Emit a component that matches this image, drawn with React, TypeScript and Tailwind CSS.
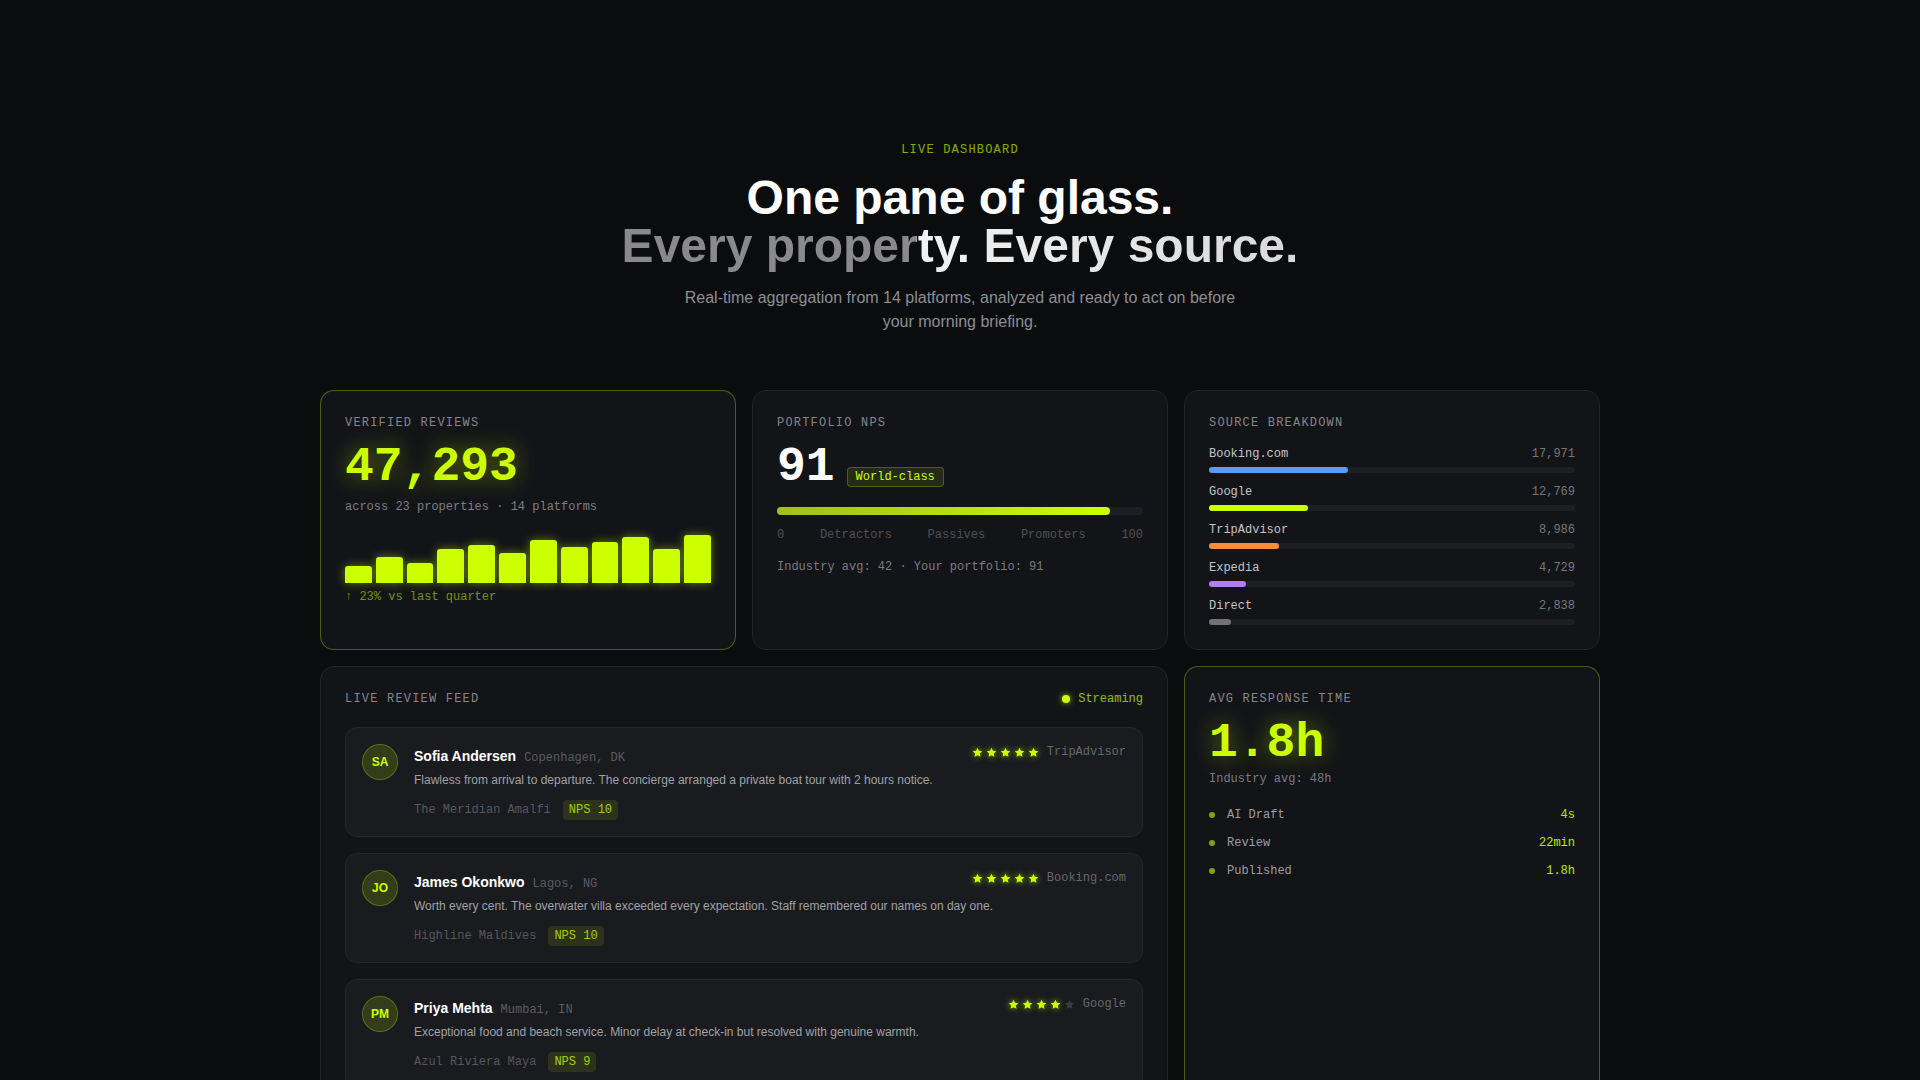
import React from "react";

const MONO = "[font-family:'Liberation_Mono',monospace]";

function Label({ children }: { children: React.ReactNode }) {
  return (
    <div className={`${MONO} text-xs leading-4 tracking-widest uppercase text-[#85868b]`}>{children}</div>
  );
}

const bars = [35, 55, 42, 70, 80, 62, 90, 75, 85, 95, 70, 100];

const sources = [
  { name: "Booking.com", v: "17,971", pct: 38, color: "bg-[#5b9df6]" },
  { name: "Google", v: "12,769", pct: 27, color: "bg-[#ccff00]" },
  { name: "TripAdvisor", v: "8,986", pct: 19, color: "bg-[#f98d3a]" },
  { name: "Expedia", v: "4,729", pct: 10, color: "bg-[#b67df3]" },
  { name: "Direct", v: "2,838", pct: 6, color: "bg-[#727378]" },
];

const reviews = [
  {
    initials: "SA",
    name: "Sofia Andersen",
    loc: "Copenhagen, DK",
    stars: 5,
    platform: "TripAdvisor",
    text: "Flawless from arrival to departure. The concierge arranged a private boat tour with 2 hours notice.",
    place: "The Meridian Amalfi",
    nps: "NPS 10",
  },
  {
    initials: "JO",
    name: "James Okonkwo",
    loc: "Lagos, NG",
    stars: 5,
    platform: "Booking.com",
    text: "Worth every cent. The overwater villa exceeded every expectation. Staff remembered our names on day one.",
    place: "Highline Maldives",
    nps: "NPS 10",
  },
  {
    initials: "PM",
    name: "Priya Mehta",
    loc: "Mumbai, IN",
    stars: 4,
    platform: "Google",
    text: "Exceptional food and beach service. Minor delay at check-in but resolved with genuine warmth.",
    place: "Azul Riviera Maya",
    nps: "NPS 9",
  },
];

function Star({ on }: { on: boolean }) {
  return (
    <svg
      width="11"
      height="11"
      viewBox="0 0 24 24"
      className={on ? "[filter:drop-shadow(0_0_3px_rgba(204,255,0,0.7))]" : ""}
    >
      <polygon
        points="12,1.5 15.1,8.3 22.5,9.1 17,14.1 18.5,21.5 12,17.8 5.5,21.5 7,14.1 1.5,9.1 8.9,8.3"
        fill={on ? "#ccff00" : "#3b3c41"}
      />
    </svg>
  );
}

const rows = [
  { k: "AI Draft", v: "4s" },
  { k: "Review", v: "22min" },
  { k: "Published", v: "1.8h" },
];

export default function App() {
  return (
    <div className="min-h-screen bg-[#0b0c0e] [font-family:'Liberation_Sans',Arial,sans-serif] text-white pb-24">
      <div className="pt-[142px] flex flex-col items-center text-center">
        <div className={`${MONO} text-xs leading-4 tracking-widest text-[#ccff00]/65`}>LIVE DASHBOARD</div>
        <h1 className="mt-4 text-5xl font-bold leading-none">
          <span className="block text-white">One pane of glass.</span>
          <span className="inline-block pb-1 -mb-1 bg-[linear-gradient(90deg,#8a8a8c_0%,#8a8a8c_43.5%,#f2f2f2_43.7%,#e6e6e6_70%,#d9d9db_100%)] bg-clip-text text-transparent">
            Every property. Every source.
          </span>
        </h1>
        <p className="mt-4 max-w-xl text-base leading-6 text-[#8e8e93]">
          Real-time aggregation from 14 platforms, analyzed and ready to act on before your morning briefing.
        </p>
      </div>

      <div className="mx-auto mt-14 w-[1280px] grid grid-cols-3 gap-4">
        {/* Verified reviews */}
        <div className="rounded-[14px] border border-[#ccff00]/30 bg-[#131418] p-6">
          <Label>Verified Reviews</Label>
          <div
            className={`${MONO} mt-3 text-5xl leading-none font-bold text-[#ccff00] [text-shadow:0_0_22px_rgba(204,255,0,0.45)]`}
          >
            47,293
          </div>
          <div className={`${MONO} mt-2 text-xs leading-4 text-[#7d7e83]`}>across 23 properties · 14 platforms</div>
          <div className="mt-5 flex h-12 items-end gap-1">
            {bars.map((h, i) => (
              <div
                key={i}
                className="flex-1 rounded-t-[3px] bg-[#ccff00] shadow-[0_0_10px_rgba(204,255,0,0.45)]"
                style={{ height: `${h}%` }}
              />
            ))}
          </div>
          <div className={`${MONO} mt-1.5 text-xs leading-4 text-[#ccff00]/55`}>↑ 23% vs last quarter</div>
        </div>

        {/* Portfolio NPS */}
        <div className="rounded-[14px] border border-[#232429] bg-[#131418] p-6">
          <Label>Portfolio NPS</Label>
          <div className="mt-3 flex items-baseline gap-3">
            <span className={`${MONO} text-5xl leading-none font-bold text-white`}>91</span>
            <span
              className={`${MONO} rounded border border-[#ccff00]/25 bg-[#ccff00]/10 px-2 py-px text-xs leading-4 text-[#ccff00]`}
            >
              World-class
            </span>
          </div>
          <div className="mt-4 h-2 w-full rounded-full bg-[#1e1f24]">
            <div className="h-2 w-[91%] rounded-full bg-[linear-gradient(90deg,#a3bd1c,#ccff00)]" />
          </div>
          <div className={`${MONO} mt-3 flex justify-between text-xs leading-4 text-[#4f5055]`}>
            <span>0</span>
            <span>Detractors</span>
            <span>Passives</span>
            <span>Promoters</span>
            <span>100</span>
          </div>
          <div className={`${MONO} mt-4 text-xs leading-4 text-[#7a7b80]`}>Industry avg: 42 · Your portfolio: 91</div>
        </div>

        {/* Source breakdown */}
        <div className="rounded-[14px] border border-[#232429] bg-[#131418] p-6">
          <Label>Source Breakdown</Label>
          <div className="mt-[15px] flex flex-col gap-[11px]">
            {sources.map((s) => (
              <div key={s.name}>
                <div className={`${MONO} flex justify-between text-xs leading-4`}>
                  <span className="text-[#c4c5c9]">{s.name}</span>
                  <span className="text-[#76777c]">{s.v}</span>
                </div>
                <div className="mt-[5px] h-1.5 w-full rounded-full bg-[#1e1f23]">
                  <div className={`h-1.5 rounded-full ${s.color}`} style={{ width: `${s.pct}%` }} />
                </div>
              </div>
            ))}
          </div>
        </div>

        {/* Live review feed */}
        <div className="col-span-2 rounded-[14px] border border-[#232429] bg-[#131418] p-6">
          <div className="flex items-center justify-between">
            <Label>Live Review Feed</Label>
            <div className={`${MONO} flex items-center gap-2 text-xs leading-4 text-[#ccff00]/70`}>
              <span className="h-2 w-2 rounded-full bg-[#ccff00] shadow-[0_0_6px_rgba(204,255,0,0.7)]" />
              Streaming
            </div>
          </div>
          <div className="mt-5 flex flex-col gap-4">
            {reviews.map((r) => (
              <div key={r.name} className="flex gap-4 rounded-xl border border-[#25262b] bg-[#1a1b1f] p-4">
                <div className="flex h-9 w-9 shrink-0 items-center justify-center rounded-full border border-[#ccff00]/25 bg-[#ccff00]/15 text-xs font-bold text-[#ccff00]">
                  {r.initials}
                </div>
                <div className="flex-1">
                  <div className="flex items-start justify-between">
                    <div className="flex items-baseline gap-2 pt-0.5">
                      <span className="text-sm leading-5 font-bold text-white">{r.name}</span>
                      <span className={`${MONO} text-xs text-[#5b5c61]`}>{r.loc}</span>
                    </div>
                    <div className="flex h-4 items-center gap-2">
                      <div className="flex items-center gap-[3px]">
                        {[0, 1, 2, 3, 4].map((i) => (
                          <Star key={i} on={i < r.stars} />
                        ))}
                      </div>
                      <span className={`${MONO} text-xs leading-4 text-[#66676c]`}>{r.platform}</span>
                    </div>
                  </div>
                  <p className="mt-1.5 text-xs leading-4 text-[#a0a1a6]">{r.text}</p>
                  <div className="mt-3 flex items-center gap-3">
                    <span className={`${MONO} text-xs leading-4 text-[#56575c]`}>{r.place}</span>
                    <span className={`${MONO} rounded bg-[#ccff00]/10 px-1.5 py-0.5 text-xs leading-4 text-[#ccff00]/75`}>
                      {r.nps}
                    </span>
                  </div>
                </div>
              </div>
            ))}
          </div>
        </div>

        {/* Avg response time */}
        <div className="rounded-[14px] border border-[#ccff00]/30 bg-[#131418] p-6">
          <Label>Avg Response Time</Label>
          <div
            className={`${MONO} mt-3 text-5xl leading-none font-bold text-[#ccff00] [text-shadow:0_0_22px_rgba(204,255,0,0.45)]`}
          >
            1.8h
          </div>
          <div className={`${MONO} mt-1 text-xs leading-4 text-[#7a7b80]`}>Industry avg: 48h</div>
          <div className="mt-5 flex flex-col gap-3">
            {rows.map((r) => (
              <div key={r.k} className={`${MONO} flex items-center text-xs leading-4`}>
                <span className="h-1.5 w-1.5 rounded-full bg-[#ccff00]/60" />
                <span className="ml-3 text-[#9c9da2]">{r.k}</span>
                <span className="ml-auto text-[#ccff00]/90">{r.v}</span>
              </div>
            ))}
          </div>
        </div>
      </div>
    </div>
  );
}
